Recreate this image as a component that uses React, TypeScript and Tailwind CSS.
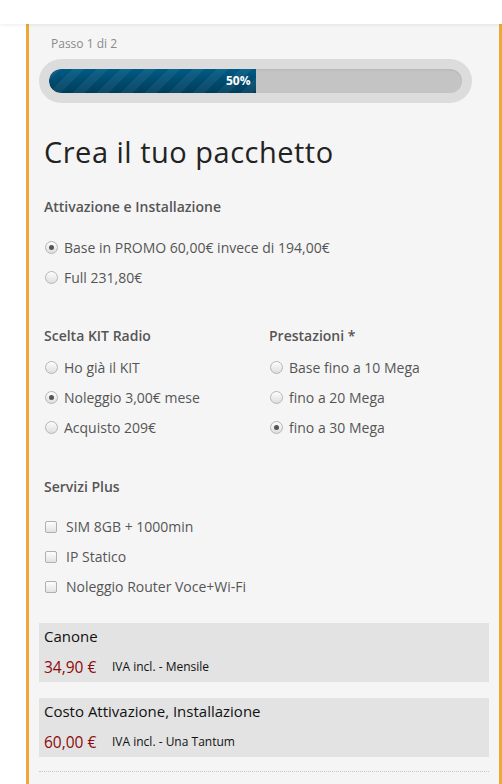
import React from "react";

const font = { fontFamily: '"Open Sans", "Liberation Sans", sans-serif' };

function Radio({ checked, label }: { checked?: boolean; label: string }) {
  return (
    <div className="flex h-[30px] items-center">
      <span className="relative ml-[1px] flex h-[13px] w-[13px] items-center justify-center rounded-full border border-[#b5b5b5] bg-gradient-to-b from-[#fdfdfd] to-[#dedede]">
        {checked && <span className="h-[5px] w-[5px] rounded-full bg-[#555]" />}
      </span>
      <span className="ml-[6px] text-[14px] text-[#555]">{label}</span>
    </div>
  );
}

function Check({ label }: { label: string }) {
  return (
    <div className="flex h-[30px] items-center">
      <span className="ml-[1px] mt-[2px] h-[12px] w-[12px] rounded-[2px] border border-[#b0b0b0] bg-gradient-to-b from-[#fdfdfd] to-[#e2e2e2]" />
      <span className="ml-[9px] text-[14px] text-[#555]">{label}</span>
    </div>
  );
}

function PriceBox({ title, price, note }: { title: string; price: string; note: string }) {
  return (
    <div className="h-[59px] bg-[#e3e3e3] px-[5px]">
      <div className="pt-[3px] text-[15px] leading-[20px] text-[#111]">{title}</div>
      <div className="mt-[10px] flex items-center">
        <span className="w-[68px] text-[15.5px] leading-[22px] text-[#8b0a0a]">{price}</span>
        <span className="text-[12px] text-[#111]">{note}</span>
      </div>
    </div>
  );
}

export default function App() {
  return (
    <div style={font} className="min-h-[784px] w-[502px] overflow-hidden bg-white">
      <div className="relative z-10 h-[24px] bg-white shadow-[0_1px_3px_rgba(0,0,0,0.08)]" />
      <div className="ml-[26px] min-h-[760px] border-x-[3px] border-[#eea838] bg-[#f5f5f5] px-[10px] pt-[11px]">
        <div className="pl-[12px] text-[12px] leading-[18px] text-[#8a8a8a]">Passo 1 di 2</div>
        <div className="mr-[17px] mt-[6px] rounded-full bg-[#dcdcdc] p-[10px]">
          <div className="h-[24px] overflow-hidden rounded-full bg-[#c4c4c4] shadow-[inset_0_1px_2px_rgba(0,0,0,0.08)]">
            <div
              className="flex h-full w-1/2 items-center justify-end rounded-l-full pr-[5px] text-[12px] font-bold text-white"
              style={{
                backgroundImage:
                  "linear-gradient(135deg, rgba(255,255,255,0.06) 25%, transparent 25%, transparent 50%, rgba(255,255,255,0.06) 50%, rgba(255,255,255,0.06) 75%, transparent 75%, transparent), linear-gradient(to bottom, #005a84, #003d5c)",
                backgroundSize: "24px 24px, 100% 100%",
              }}
            >
              50%
            </div>
          </div>
        </div>
        <div className="pl-[5px]">
          <h1 className="mt-[31px] text-[29px] leading-[36px] tracking-[0.5px] text-[#222]">Crea il tuo pacchetto</h1>
          <div className="mt-[27px] text-[14px] font-semibold leading-[20px] text-[#555]">Attivazione e Installazione</div>
          <div className="mt-[15px]">
            <Radio checked label="Base in PROMO 60,00€ invece di 194,00€" />
            <Radio label="Full 231,80€" />
          </div>
          <div className="mt-[34px] grid grid-cols-[225px_1fr]">
            <div>
              <div className="text-[14px] font-semibold leading-[20px] text-[#555]">Scelta KIT Radio</div>
              <div className="mt-[6px]">
                <Radio label="Ho già il KIT" />
                <Radio checked label="Noleggio 3,00€ mese" />
                <Radio label="Acquisto 209€" />
              </div>
            </div>
            <div>
              <div className="text-[14px] font-semibold leading-[20px] text-[#555]">Prestazioni *</div>
              <div className="mt-[6px]">
                <Radio label="Base fino a 10 Mega" />
                <Radio label="fino a 20 Mega" />
                <Radio checked label="fino a 30 Mega" />
              </div>
            </div>
          </div>
          <div className="mt-[35px] text-[14px] font-semibold leading-[20px] text-[#555]">Servizi Plus</div>
          <div className="mt-[14px]">
            <Check label="SIM 8GB + 1000min" />
            <Check label="IP Statico" />
            <Check label="Noleggio Router Voce+Wi-Fi" />
          </div>
        </div>
        <div className="mt-[22px]">
          <PriceBox title="Canone" price="34,90 €" note="IVA incl. - Mensile" />
        </div>
        <div className="mt-[16px]">
          <PriceBox title="Costo Attivazione, Installazione" price="60,00 €" note="IVA incl. - Una Tantum" />
        </div>
        <div className="mt-[14px] border-t border-dotted border-[#c8c8c8]" />
      </div>
    </div>
  );
}
